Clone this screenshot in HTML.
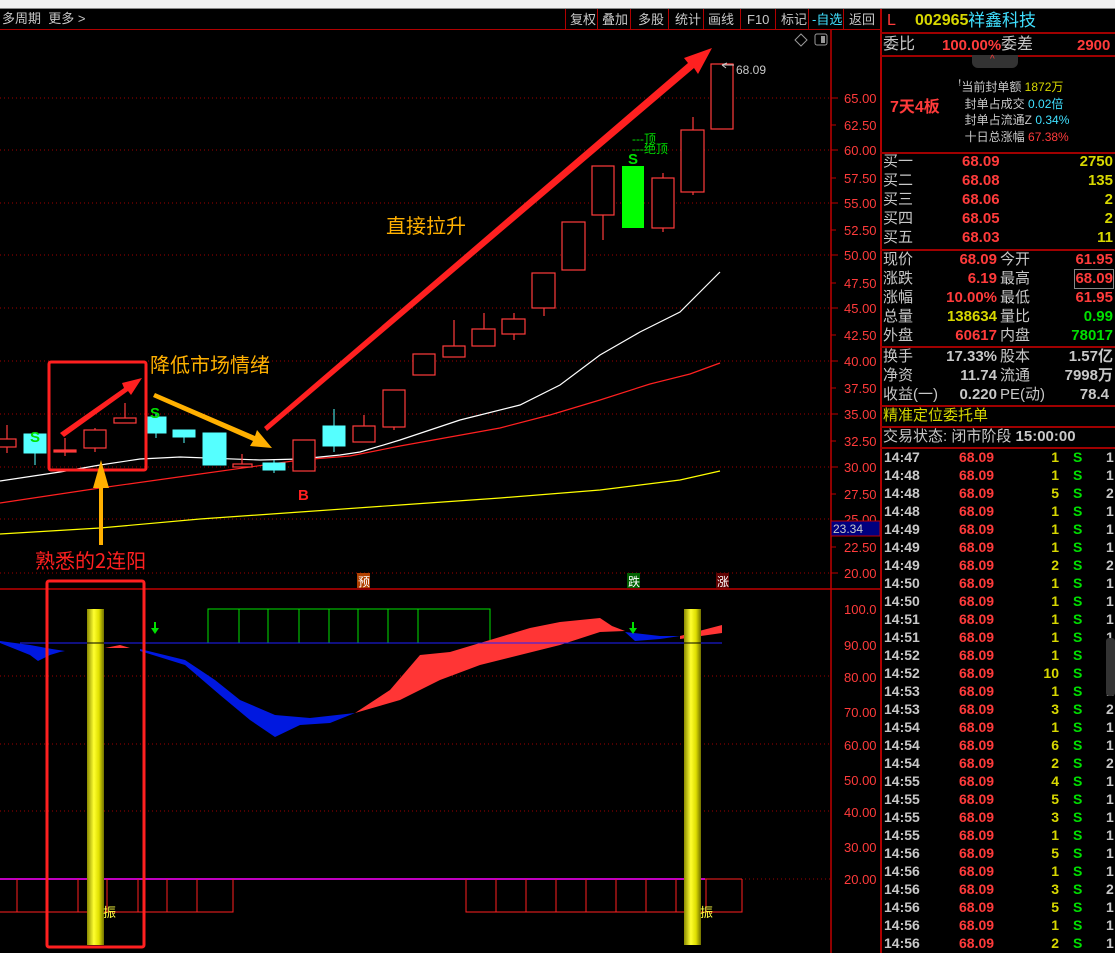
<!DOCTYPE html>
<html><head><meta charset="utf-8"><style>
*{margin:0;padding:0;box-sizing:border-box}
body{width:1115px;height:953px;background:#000;overflow:hidden;position:relative;font-family:"Liberation Sans","Noto Sans CJK SC",sans-serif;font-size:14px;color:#c8c8c8}
.a{position:absolute;white-space:nowrap;line-height:1}
.hl{position:absolute;left:880px;width:235px;height:2px;background:#a00000}
.r{color:#ff3b3b}.y{color:#d8d800}.g{color:#00e000}.c{color:#40e0ff}.w{color:#c8c8c8}
.b{font-weight:bold}
.row{position:absolute;left:880px;width:235px;height:18px;font-size:15px;line-height:18px}
.row span{position:absolute}
</style></head><body>
<div class="a" style="left:0;top:0;width:1115px;height:8px;background:#f0f0f0"></div>
<div class="a" style="left:0;top:8px;width:1115px;height:1px;background:#888"></div>
<div class="a" style="left:0;top:29px;width:880px;height:1px;background:#b00000"></div>
<div class="a" style="left:2px;top:12px;font-size:13px;color:#c8c8c8">多周期&nbsp; 更多 &gt;</div>
<!-- buttons -->
<div class="a" style="left:565px;top:9px;width:315px;height:20px;font-size:13px">
<span class="a" style="left:0;top:0;width:1px;height:20px;background:#b00000"></span>
<span class="a" style="left:5px;top:4px">复权</span><span class="a" style="left:32px;top:0;width:1px;height:20px;background:#b00000"></span>
<span class="a" style="left:37px;top:4px">叠加</span><span class="a" style="left:65px;top:0;width:1px;height:20px;background:#b00000"></span>
<span class="a" style="left:73px;top:4px">多股</span><span class="a" style="left:103px;top:0;width:1px;height:20px;background:#b00000"></span>
<span class="a" style="left:110px;top:4px">统计</span><span class="a" style="left:138px;top:0;width:1px;height:20px;background:#b00000"></span>
<span class="a" style="left:143px;top:4px">画线</span><span class="a" style="left:175px;top:0;width:1px;height:20px;background:#b00000"></span>
<span class="a" style="left:182px;top:4px">F10</span><span class="a" style="left:210px;top:0;width:1px;height:20px;background:#b00000"></span>
<span class="a" style="left:216px;top:4px">标记</span><span class="a" style="left:243px;top:0;width:1px;height:20px;background:#b00000"></span>
<span class="a c" style="left:247px;top:4px">-自选</span><span class="a" style="left:278px;top:0;width:1px;height:20px;background:#b00000"></span>
<span class="a" style="left:284px;top:4px">返回</span>
</div>
<div class="a" style="left:880px;top:9px;width:2px;height:944px;background:#b00000"></div>

<svg class="a" style="left:0;top:30px" width="880" height="923" viewBox="0 30 880 923">
<g stroke="#a00000" stroke-dasharray="1,3" stroke-width="1">
<line x1="0" y1="98" x2="830" y2="98"/><line x1="0" y1="150" x2="830" y2="150"/><line x1="0" y1="203" x2="830" y2="203"/><line x1="0" y1="255" x2="830" y2="255"/><line x1="0" y1="308" x2="830" y2="308"/><line x1="0" y1="361" x2="830" y2="361"/><line x1="0" y1="414" x2="830" y2="414"/><line x1="0" y1="467" x2="830" y2="467"/><line x1="0" y1="519" x2="830" y2="519"/><line x1="0" y1="573" x2="830" y2="573"/>
<line x1="0" y1="676" x2="830" y2="676"/><line x1="0" y1="744" x2="830" y2="744"/><line x1="0" y1="811" x2="830" y2="811"/><line x1="705" y1="879" x2="830" y2="879"/>
</g>
<line x1="831" y1="30" x2="831" y2="953" stroke="#c00000" stroke-width="1.5"/>
<line x1="0" y1="589" x2="880" y2="589" stroke="#c00000" stroke-width="1.5"/>
<g fill="#ff3b3b" font-size="13" font-family="Liberation Sans">
<text x="844" y="103">65.00</text><text x="844" y="130">62.50</text><text x="844" y="155">60.00</text><text x="844" y="183">57.50</text><text x="844" y="208">55.00</text><text x="844" y="235">52.50</text><text x="844" y="260">50.00</text><text x="844" y="288">47.50</text><text x="844" y="313">45.00</text><text x="844" y="340">42.50</text><text x="844" y="366">40.00</text><text x="844" y="393">37.50</text><text x="844" y="419">35.00</text><text x="844" y="446">32.50</text><text x="844" y="472">30.00</text><text x="844" y="499">27.50</text><text x="844" y="524">25.00</text><text x="844" y="552">22.50</text><text x="844" y="578">20.00</text>
<text x="844" y="614">100.0</text><text x="844" y="650">90.00</text><text x="844" y="682">80.00</text><text x="844" y="717">70.00</text><text x="844" y="750">60.00</text><text x="844" y="785">50.00</text><text x="844" y="817">40.00</text><text x="844" y="852">30.00</text><text x="844" y="884">20.00</text>
</g>
<g stroke="#c00000"><line x1="831" y1="98" x2="838" y2="98"/><line x1="831" y1="125" x2="836" y2="125"/><line x1="831" y1="150" x2="838" y2="150"/><line x1="831" y1="178" x2="836" y2="178"/><line x1="831" y1="203" x2="838" y2="203"/><line x1="831" y1="230" x2="836" y2="230"/><line x1="831" y1="255" x2="838" y2="255"/><line x1="831" y1="283" x2="836" y2="283"/><line x1="831" y1="308" x2="838" y2="308"/><line x1="831" y1="335" x2="836" y2="335"/><line x1="831" y1="361" x2="838" y2="361"/><line x1="831" y1="388" x2="836" y2="388"/><line x1="831" y1="414" x2="838" y2="414"/><line x1="831" y1="441" x2="836" y2="441"/><line x1="831" y1="467" x2="838" y2="467"/><line x1="831" y1="494" x2="836" y2="494"/><line x1="831" y1="547" x2="836" y2="547"/><line x1="831" y1="573" x2="838" y2="573"/></g>
<rect x="831" y="521" width="49" height="15" fill="#000080" stroke="#c00000"/>
<text x="833" y="533" fill="#c8c8c8" font-size="12">23.34</text>
<!-- MAs -->
<polyline fill="none" stroke="#ffff00" stroke-width="1.2" points="0,534 100,528 200,519 300,512 400,505 500,498 600,490 680,480 720,471"/>
<polyline fill="none" stroke="#ff2020" stroke-width="1.2" points="0,503 100,488 200,474 300,460 350,456 400,446 450,437 500,428 550,415 600,400 650,384 690,374 720,363"/>
<polyline fill="none" stroke="#ffffff" stroke-width="1.2" points="0,481 60,472 100,465 140,459 180,457 260,460 300,459 340,455 360,452 400,440 460,420 520,405 560,385 600,355 640,332 680,312 700,292 720,272"/>
<!-- candles -->
<g stroke="#ff3b3b" stroke-width="1.2" fill="none">
<line x1="7" y1="425" x2="7" y2="453"/><rect x="-4" y="439" width="20" height="8" fill="#000"/>
<line x1="65" y1="438" x2="65" y2="456"/><rect x="54" y="450" width="22" height="2" fill="#ff3b3b"/>
<line x1="95" y1="428" x2="95" y2="452"/><rect x="84" y="430" width="22" height="18" fill="#000"/>
<line x1="125" y1="403" x2="125" y2="423"/><rect x="114" y="418" width="22" height="5" fill="#000"/>
<line x1="242" y1="454" x2="242" y2="468"/><rect x="233" y="464" width="19" height="3" fill="#000"/>
<rect x="293" y="440" width="22" height="31" fill="#000"/>
<line x1="364" y1="415" x2="364" y2="426"/><rect x="353" y="426" width="22" height="16" fill="#000"/>
<line x1="394" y1="427" x2="394" y2="430"/><rect x="383" y="390" width="22" height="37" fill="#000"/>
<rect x="413" y="354" width="22" height="21" fill="#000"/>
<line x1="454" y1="320" x2="454" y2="346"/><rect x="443" y="346" width="22" height="11" fill="#000"/>
<line x1="484" y1="313" x2="484" y2="329"/><rect x="472" y="329" width="23" height="17" fill="#000"/>
<line x1="514" y1="313" x2="514" y2="340"/><rect x="502" y="319" width="23" height="15" fill="#000"/>
<line x1="544" y1="308" x2="544" y2="316"/><rect x="532" y="273" width="23" height="35" fill="#000"/>
<rect x="562" y="222" width="23" height="48" fill="#000"/>
<line x1="603" y1="215" x2="603" y2="240"/><rect x="592" y="166" width="22" height="49" fill="#000"/>
<line x1="663" y1="173" x2="663" y2="232"/><rect x="652" y="178" width="22" height="50" fill="#000"/>
<line x1="693" y1="117" x2="693" y2="195"/><rect x="681" y="130" width="23" height="62" fill="#000"/>
<rect x="711" y="64" width="22" height="65" fill="#000"/>
</g>
<g fill="#55ffff" stroke="#55ffff">
<line x1="35" y1="453" x2="35" y2="465"/><rect x="24" y="434" width="22" height="19"/>
<line x1="156" y1="413" x2="156" y2="438"/><rect x="147" y="417" width="19" height="16"/>
<line x1="184" y1="437" x2="184" y2="443"/><rect x="173" y="430" width="22" height="7"/>
<rect x="203" y="433" width="23" height="32"/>
<line x1="274" y1="460" x2="274" y2="473"/><rect x="263" y="463" width="22" height="7"/>
<line x1="334" y1="409" x2="334" y2="452"/><rect x="323" y="426" width="22" height="20"/>
</g>
<rect x="622" y="166" width="22" height="62" fill="#00ff00"/>
<g fill="#00e000" font-size="15" font-weight="bold"><text x="30" y="442">S</text><text x="150" y="418">S</text><text x="628" y="164">S</text></g>
<g fill="#00e000" font-size="12"><text x="632" y="143">---顶</text><text x="632" y="153">---绝顶</text></g>
<text x="736" y="74" fill="#c8c8c8" font-size="12">68.09</text>
<path d="M722 65 l5 -2 M722 65 l4 3 M722 65 h12" stroke="#c8c8c8" fill="none"/>
<path d="M801 34 l6 6 -6 6 -6 -6z" fill="none" stroke="#999"/>
<rect x="815" y="34" width="12" height="11" rx="2" fill="none" stroke="#999"/><rect x="821" y="36" width="4" height="7" fill="#999"/>
<text x="298" y="500" fill="#ff2020" font-size="15" font-weight="bold">B</text>
<rect x="357" y="573" width="13" height="15" fill="#b04000"/><text x="358" y="586" fill="#fff" font-size="12">预</text>
<rect x="627" y="573" width="13" height="15" fill="#006000"/><text x="628" y="586" fill="#fff" font-size="12">跌</text>
<rect x="716" y="573" width="13" height="15" fill="#600000"/><text x="717" y="586" fill="#fff" font-size="12">涨</text>
<!-- indicator -->
<g stroke="#00e000" fill="none"><rect x="208" y="609" width="282" height="34"/><line x1="239" y1="609" x2="239" y2="643"/><line x1="268" y1="609" x2="268" y2="643"/><line x1="299" y1="609" x2="299" y2="643"/><line x1="329" y1="609" x2="329" y2="643"/><line x1="358" y1="609" x2="358" y2="643"/><line x1="388" y1="609" x2="388" y2="643"/><line x1="418" y1="609" x2="418" y2="643"/></g>
<polygon fill="#0018e0" points="0,641 30,645 52,649 65,651 60,652 50,655 38,661 30,655 0,643"/>
<polygon fill="#ff3535" points="105,648 120,645 130,648"/>
<polygon fill="#0018e0" points="140,649 185,660 215,680 240,700 275,715 310,718 355,713 330,723 300,725 275,737 250,720 220,695 185,665 140,651"/>
<polygon fill="#ff3535" points="355,713 390,690 420,655 450,652 490,640 530,628 560,622 600,618 612,626 625,631 600,632 560,645 520,655 480,665 440,680 400,700"/>
<polygon fill="#0018e0" points="625,632 660,636 680,636 660,639 635,641"/>
<polygon fill="#ff3535" points="680,636 722,625 722,633 680,639"/>
<line x1="20" y1="643" x2="722" y2="643" stroke="#2020ff"/>
<g fill="#00e000"><rect x="154" y="622" width="2" height="8"/><path d="M151 628h8l-4 6z"/><rect x="632" y="622" width="2" height="8"/><path d="M629 628h8l-4 6z"/></g>
<line x1="0" y1="879" x2="705" y2="879" stroke="#ff00ff" stroke-width="1.5"/>
<line x1="705" y1="879" x2="742" y2="879" stroke="#ff2020"/>
<g stroke="#ff2020" fill="none"><polyline points="0,912 233,912 233,879"/><line x1="17" y1="879" x2="17" y2="912"/><line x1="78" y1="879" x2="78" y2="912"/><line x1="107" y1="879" x2="107" y2="912"/><line x1="138" y1="879" x2="138" y2="912"/><line x1="167" y1="879" x2="167" y2="912"/><line x1="197" y1="879" x2="197" y2="912"/>
<polyline points="466,879 466,912 742,912 742,879"/><line x1="496" y1="879" x2="496" y2="912"/><line x1="526" y1="879" x2="526" y2="912"/><line x1="556" y1="879" x2="556" y2="912"/><line x1="586" y1="879" x2="586" y2="912"/><line x1="616" y1="879" x2="616" y2="912"/><line x1="646" y1="879" x2="646" y2="912"/><line x1="676" y1="879" x2="676" y2="912"/><line x1="706" y1="879" x2="706" y2="912"/></g>
<defs><linearGradient id="yb" x1="0" x2="1"><stop offset="0" stop-color="#8a8a00"/><stop offset=".4" stop-color="#ffff30"/><stop offset=".7" stop-color="#e0e000"/><stop offset="1" stop-color="#707000"/></linearGradient></defs>
<rect x="87" y="609" width="17" height="336" fill="url(#yb)"/><rect x="684" y="609" width="17" height="336" fill="url(#yb)"/>
<line x1="87" y1="643" x2="104" y2="643" stroke="#000"/><line x1="684" y1="643" x2="701" y2="643" stroke="#000"/>
<g fill="#ffff40" font-size="13"><text x="103" y="917">振</text><text x="700" y="917">振</text></g>
<!-- annotations -->
<g fill="none" stroke="#ff2020" stroke-width="3"><rect x="49" y="362" width="97" height="108" rx="2"/><rect x="47" y="581" width="97" height="366" rx="2"/></g>
<polygon fill="#ff2020" points="60,433 124,388 122,383 142,378 131,395 128,391 64,437"/>
<polygon fill="#ffb000" points="155,393 255,436 257,430 272,448 250,446 253,441 153,397"/>
<polygon fill="#ffb000" points="99,545 99,488 93,488 101,460 109,488 103,488 103,545"/>
<polygon fill="#ff2020" points="264,427 688,63 684,58 712,48 698,74 694,68 267,431"/>
<g font-size="20" font-family="Noto Sans CJK SC,sans-serif"><text x="150" y="372" fill="#ffb000">降低市场情绪</text><text x="386" y="233" fill="#ffb000">直接拉升</text><text x="35" y="568" fill="#ff2020">熟悉的2连阳</text></g>
</svg>

<!-- right panel -->
<div class="a r" style="left:887px;top:13px;font-size:16px">L</div>
<div class="a y b" style="left:915px;top:13px;font-size:16px">002965</div>
<div class="a c" style="left:968px;top:12px;font-size:17px">祥鑫科技</div>
<div class="hl" style="top:32px"></div>
<div class="a" style="left:883px;top:37px;font-size:16px">委比</div>
<div class="a r b" style="left:942px;top:38px;font-size:15px">100.00%</div>
<div class="a" style="left:1001px;top:37px;font-size:16px">委差</div>
<div class="a r b" style="left:1077px;top:38px;font-size:15px">2900</div>
<div class="hl" style="top:55px"></div>
<div class="a" style="left:972px;top:55px;width:46px;height:13px;background:#333;border-radius:0 0 6px 6px"></div>
<div class="a r" style="left:990px;top:55px;font-size:10px">^</div>
<div class="a r b" style="left:890px;top:100px;font-size:16px">7天4板</div>
<div class="a" style="left:958px;top:79px;font-size:12px;line-height:16.5px">
<div>ꜝ当前封单额 <span class="y">1872万</span></div>
<div>&nbsp; 封单占成交 <span class="c">0.02倍</span></div>
<div>&nbsp; 封单占流通Z <span class="c">0.34%</span></div>
<div>&nbsp; 十日总涨幅 <span class="r">67.38%</span></div></div>
<div class="hl" style="top:152px"></div>
<div class="row" style="top:153px"><span style="left:3px">买一</span><span class="r b" style="left:82px">68.09</span><span class="y b" style="right:2px">2750</span></div>
<div class="row" style="top:172px"><span style="left:3px">买二</span><span class="r b" style="left:82px">68.08</span><span class="y b" style="right:2px">135</span></div>
<div class="row" style="top:191px"><span style="left:3px">买三</span><span class="r b" style="left:82px">68.06</span><span class="y b" style="right:2px">2</span></div>
<div class="row" style="top:210px"><span style="left:3px">买四</span><span class="r b" style="left:82px">68.05</span><span class="y b" style="right:2px">2</span></div>
<div class="row" style="top:229px"><span style="left:3px">买五</span><span class="r b" style="left:82px">68.03</span><span class="y b" style="right:2px">11</span></div>
<div class="hl" style="top:249px"></div>
<div class="row" style="top:251px"><span style="left:3px">现价</span><span class="r b" style="right:118px">68.09</span><span style="left:120px">今开</span><span class="r b" style="right:2px">61.95</span></div>
<div class="row" style="top:270px"><span style="left:3px">涨跌</span><span class="r b" style="right:118px">6.19</span><span style="left:120px">最高</span><span class="r b" style="right:2px;outline:1px solid #888">68.09</span></div>
<div class="row" style="top:289px"><span style="left:3px">涨幅</span><span class="r b" style="right:118px">10.00%</span><span style="left:120px">最低</span><span class="r b" style="right:2px">61.95</span></div>
<div class="row" style="top:308px"><span style="left:3px">总量</span><span class="y b" style="right:118px">138634</span><span style="left:120px">量比</span><span class="g b" style="right:2px">0.99</span></div>
<div class="row" style="top:327px"><span style="left:3px">外盘</span><span class="r b" style="right:118px">60617</span><span style="left:120px">内盘</span><span class="g b" style="right:2px">78017</span></div>
<div class="hl" style="top:346px"></div>
<div class="row" style="top:348px"><span style="left:3px">换手</span><span class="b" style="right:118px">17.33%</span><span style="left:120px">股本</span><span class="b" style="right:2px">1.57亿</span></div>
<div class="row" style="top:367px"><span style="left:3px">净资</span><span class="b" style="right:118px">11.74</span><span style="left:120px">流通</span><span class="b" style="right:2px">7998万</span></div>
<div class="row" style="top:386px"><span style="left:3px">收益(一)</span><span class="b" style="right:118px">0.220</span><span style="left:120px">PE(动)</span><span class="b" style="right:6px">78.4</span></div>
<div class="hl" style="top:405px"></div>
<div class="row y" style="top:407px"><span style="left:3px">精准定位委托单</span></div>
<div class="hl" style="top:426px"></div>
<div class="row" style="top:428px"><span style="left:3px">交易状态: 闭市阶段 <b>15:00:00</b></span></div>
<div class="hl" style="top:447px"></div>
<div id="ticks" style="position:absolute;left:880px;top:448px;width:235px;font-size:14px;font-weight:bold;line-height:18px">
<div style="position:relative;height:18px"><span class="a" style="left:4px;top:2px">14:47</span><span class="a r" style="left:79px;top:2px">68.09</span><span class="a y" style="right:56px;top:2px">1</span><span class="a g" style="left:193px;top:2px">S</span><span class="a" style="left:226px;top:2px">1</span></div>
<div style="position:relative;height:18px"><span class="a" style="left:4px;top:2px">14:48</span><span class="a r" style="left:79px;top:2px">68.09</span><span class="a y" style="right:56px;top:2px">1</span><span class="a g" style="left:193px;top:2px">S</span><span class="a" style="left:226px;top:2px">1</span></div>
<div style="position:relative;height:18px"><span class="a" style="left:4px;top:2px">14:48</span><span class="a r" style="left:79px;top:2px">68.09</span><span class="a y" style="right:56px;top:2px">5</span><span class="a g" style="left:193px;top:2px">S</span><span class="a" style="left:226px;top:2px">2</span></div>
<div style="position:relative;height:18px"><span class="a" style="left:4px;top:2px">14:48</span><span class="a r" style="left:79px;top:2px">68.09</span><span class="a y" style="right:56px;top:2px">1</span><span class="a g" style="left:193px;top:2px">S</span><span class="a" style="left:226px;top:2px">1</span></div>
<div style="position:relative;height:18px"><span class="a" style="left:4px;top:2px">14:49</span><span class="a r" style="left:79px;top:2px">68.09</span><span class="a y" style="right:56px;top:2px">1</span><span class="a g" style="left:193px;top:2px">S</span><span class="a" style="left:226px;top:2px">1</span></div>
<div style="position:relative;height:18px"><span class="a" style="left:4px;top:2px">14:49</span><span class="a r" style="left:79px;top:2px">68.09</span><span class="a y" style="right:56px;top:2px">1</span><span class="a g" style="left:193px;top:2px">S</span><span class="a" style="left:226px;top:2px">1</span></div>
<div style="position:relative;height:18px"><span class="a" style="left:4px;top:2px">14:49</span><span class="a r" style="left:79px;top:2px">68.09</span><span class="a y" style="right:56px;top:2px">2</span><span class="a g" style="left:193px;top:2px">S</span><span class="a" style="left:226px;top:2px">2</span></div>
<div style="position:relative;height:18px"><span class="a" style="left:4px;top:2px">14:50</span><span class="a r" style="left:79px;top:2px">68.09</span><span class="a y" style="right:56px;top:2px">1</span><span class="a g" style="left:193px;top:2px">S</span><span class="a" style="left:226px;top:2px">1</span></div>
<div style="position:relative;height:18px"><span class="a" style="left:4px;top:2px">14:50</span><span class="a r" style="left:79px;top:2px">68.09</span><span class="a y" style="right:56px;top:2px">1</span><span class="a g" style="left:193px;top:2px">S</span><span class="a" style="left:226px;top:2px">1</span></div>
<div style="position:relative;height:18px"><span class="a" style="left:4px;top:2px">14:51</span><span class="a r" style="left:79px;top:2px">68.09</span><span class="a y" style="right:56px;top:2px">1</span><span class="a g" style="left:193px;top:2px">S</span><span class="a" style="left:226px;top:2px">1</span></div>
<div style="position:relative;height:18px"><span class="a" style="left:4px;top:2px">14:51</span><span class="a r" style="left:79px;top:2px">68.09</span><span class="a y" style="right:56px;top:2px">1</span><span class="a g" style="left:193px;top:2px">S</span><span class="a" style="left:226px;top:2px">1</span></div>
<div style="position:relative;height:18px"><span class="a" style="left:4px;top:2px">14:52</span><span class="a r" style="left:79px;top:2px">68.09</span><span class="a y" style="right:56px;top:2px">1</span><span class="a g" style="left:193px;top:2px">S</span><span class="a" style="left:226px;top:2px">1</span></div>
<div style="position:relative;height:18px"><span class="a" style="left:4px;top:2px">14:52</span><span class="a r" style="left:79px;top:2px">68.09</span><span class="a y" style="right:56px;top:2px">10</span><span class="a g" style="left:193px;top:2px">S</span><span class="a" style="left:226px;top:2px">1</span></div>
<div style="position:relative;height:18px"><span class="a" style="left:4px;top:2px">14:53</span><span class="a r" style="left:79px;top:2px">68.09</span><span class="a y" style="right:56px;top:2px">1</span><span class="a g" style="left:193px;top:2px">S</span><span class="a" style="left:226px;top:2px">1</span></div>
<div style="position:relative;height:18px"><span class="a" style="left:4px;top:2px">14:53</span><span class="a r" style="left:79px;top:2px">68.09</span><span class="a y" style="right:56px;top:2px">3</span><span class="a g" style="left:193px;top:2px">S</span><span class="a" style="left:226px;top:2px">2</span></div>
<div style="position:relative;height:18px"><span class="a" style="left:4px;top:2px">14:54</span><span class="a r" style="left:79px;top:2px">68.09</span><span class="a y" style="right:56px;top:2px">1</span><span class="a g" style="left:193px;top:2px">S</span><span class="a" style="left:226px;top:2px">1</span></div>
<div style="position:relative;height:18px"><span class="a" style="left:4px;top:2px">14:54</span><span class="a r" style="left:79px;top:2px">68.09</span><span class="a y" style="right:56px;top:2px">6</span><span class="a g" style="left:193px;top:2px">S</span><span class="a" style="left:226px;top:2px">1</span></div>
<div style="position:relative;height:18px"><span class="a" style="left:4px;top:2px">14:54</span><span class="a r" style="left:79px;top:2px">68.09</span><span class="a y" style="right:56px;top:2px">2</span><span class="a g" style="left:193px;top:2px">S</span><span class="a" style="left:226px;top:2px">2</span></div>
<div style="position:relative;height:18px"><span class="a" style="left:4px;top:2px">14:55</span><span class="a r" style="left:79px;top:2px">68.09</span><span class="a y" style="right:56px;top:2px">4</span><span class="a g" style="left:193px;top:2px">S</span><span class="a" style="left:226px;top:2px">1</span></div>
<div style="position:relative;height:18px"><span class="a" style="left:4px;top:2px">14:55</span><span class="a r" style="left:79px;top:2px">68.09</span><span class="a y" style="right:56px;top:2px">5</span><span class="a g" style="left:193px;top:2px">S</span><span class="a" style="left:226px;top:2px">1</span></div>
<div style="position:relative;height:18px"><span class="a" style="left:4px;top:2px">14:55</span><span class="a r" style="left:79px;top:2px">68.09</span><span class="a y" style="right:56px;top:2px">3</span><span class="a g" style="left:193px;top:2px">S</span><span class="a" style="left:226px;top:2px">1</span></div>
<div style="position:relative;height:18px"><span class="a" style="left:4px;top:2px">14:55</span><span class="a r" style="left:79px;top:2px">68.09</span><span class="a y" style="right:56px;top:2px">1</span><span class="a g" style="left:193px;top:2px">S</span><span class="a" style="left:226px;top:2px">1</span></div>
<div style="position:relative;height:18px"><span class="a" style="left:4px;top:2px">14:56</span><span class="a r" style="left:79px;top:2px">68.09</span><span class="a y" style="right:56px;top:2px">5</span><span class="a g" style="left:193px;top:2px">S</span><span class="a" style="left:226px;top:2px">1</span></div>
<div style="position:relative;height:18px"><span class="a" style="left:4px;top:2px">14:56</span><span class="a r" style="left:79px;top:2px">68.09</span><span class="a y" style="right:56px;top:2px">1</span><span class="a g" style="left:193px;top:2px">S</span><span class="a" style="left:226px;top:2px">1</span></div>
<div style="position:relative;height:18px"><span class="a" style="left:4px;top:2px">14:56</span><span class="a r" style="left:79px;top:2px">68.09</span><span class="a y" style="right:56px;top:2px">3</span><span class="a g" style="left:193px;top:2px">S</span><span class="a" style="left:226px;top:2px">2</span></div>
<div style="position:relative;height:18px"><span class="a" style="left:4px;top:2px">14:56</span><span class="a r" style="left:79px;top:2px">68.09</span><span class="a y" style="right:56px;top:2px">5</span><span class="a g" style="left:193px;top:2px">S</span><span class="a" style="left:226px;top:2px">1</span></div>
<div style="position:relative;height:18px"><span class="a" style="left:4px;top:2px">14:56</span><span class="a r" style="left:79px;top:2px">68.09</span><span class="a y" style="right:56px;top:2px">1</span><span class="a g" style="left:193px;top:2px">S</span><span class="a" style="left:226px;top:2px">1</span></div>
<div style="position:relative;height:18px"><span class="a" style="left:4px;top:2px">14:56</span><span class="a r" style="left:79px;top:2px">68.09</span><span class="a y" style="right:56px;top:2px">2</span><span class="a g" style="left:193px;top:2px">S</span><span class="a" style="left:226px;top:2px">1</span></div>
</div>
<div class="a" style="left:1106px;top:638px;width:9px;height:58px;background:#333;border-radius:3px"></div>
</body></html>
